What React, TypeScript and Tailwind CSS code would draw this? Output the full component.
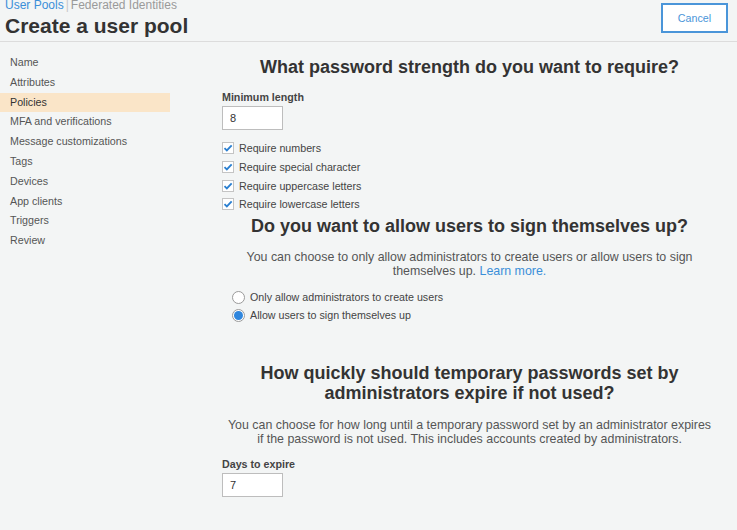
const navItems = [
  "Name",
  "Attributes",
  "Policies",
  "MFA and verifications",
  "Message customizations",
  "Tags",
  "Devices",
  "App clients",
  "Triggers",
  "Review",
]

const checks = [
  "Require numbers",
  "Require special character",
  "Require uppercase letters",
  "Require lowercase letters",
]

const Check = () => (
  <span className="flex h-[12px] w-[12px] items-center justify-center border border-[#c4c4c4] bg-white">
    <svg viewBox="0 0 12 12" className="h-[10px] w-[10px]">
      <path d="M1.8 6.2 L4.6 8.9 L10.4 2.8" fill="none" stroke="#2a7fd0" strokeWidth="2.2" />
    </svg>
  </span>
)

const Radio = ({ on }: { on?: boolean }) => (
  <span className="flex h-[13px] w-[13px] items-center justify-center rounded-full border border-[#9a9a9a] bg-white">
    {on && <span className="h-[9px] w-[9px] rounded-full bg-[#2f86dd]"></span>}
  </span>
)

export default function App() {
  return (
    <div className="min-h-screen w-full bg-[#f3f5f5] text-[#444] font-['Liberation_Sans',Arial,sans-serif]">
      <div className="flex h-[42px] items-start justify-between border-b border-[#dcdcdc] pl-[5px] pr-[9px]">
        <div>
          <div className="text-[12px] leading-[12px] -mt-[1px]">
            <span className="text-[#3b8fd9]">User Pools</span>
            <span className="mx-[2px] text-[#c8c8c8]">|</span>
            <span className="text-[#9a9a9a]">Federated Identities</span>
          </div>
          <h1 className="mt-[3px] text-[21px] font-bold leading-[24px] text-[#333]">Create a user pool</h1>
        </div>
        <button className="mt-[3px] h-[30px] w-[67px] border-2 border-[#4a95d9] bg-white text-[10.7px] text-[#4a95d9]">
          Cancel
        </button>
      </div>

      <div className="flex">
        <div className="w-[170px] pt-[11px]">
          {navItems.map((n) => (
            <div
              key={n}
              className={`h-[19.8px] pl-[10px] text-[10.7px] leading-[19.8px] ${n === "Policies" ? "bg-[#fae5c8] text-[#333]" : "text-[#555]"}`}
            >
              {n}
            </div>
          ))}
        </div>

        <div className="ml-[52px] w-[495px] pt-[14px]">
          <h2 className="text-center text-[18px] font-bold leading-[22px] text-[#333]">
            What password strength do you want to require?
          </h2>
          <div className="mt-[12px] text-[10.7px] font-bold leading-[14px] text-[#444]">Minimum length</div>
          <div className="mt-[2px] flex h-[24px] w-[61px] items-center border border-[#bdbdbd] bg-white pl-[7px] text-[11px] text-[#333]">
            8
          </div>
          <div className="mt-[11px] flex flex-col gap-[4.8px]">
            {checks.map((c) => (
              <label key={c} className="flex items-center gap-[5px] text-[10.7px] leading-[14px] text-[#444]">
                <Check />
                {c}
              </label>
            ))}
          </div>

          <h2 className="mt-[4px] text-center text-[18px] font-bold leading-[22px] text-[#333]">
            Do you want to allow users to sign themselves up?
          </h2>
          <p className="mx-auto mt-[13px] w-[470px] text-center text-[12.4px] leading-[14px] text-[#555]">
            You can choose to only allow administrators to create users or allow users to sign themselves up.{" "}
            <span className="text-[#3b8fd9]">Learn more.</span>
          </p>
          <div className="ml-[10px] mt-[12px] flex flex-col gap-[4px]">
            <label className="flex items-center gap-[5px] text-[10.7px] leading-[14px] text-[#444]">
              <Radio />
              Only allow administrators to create users
            </label>
            <label className="flex items-center gap-[5px] text-[10.7px] leading-[14px] text-[#444]">
              <Radio on />
              Allow users to sign themselves up
            </label>
          </div>

          <h2 className="mx-auto mt-[41px] w-[440px] text-center text-[18px] font-bold leading-[20px] text-[#333]">
            How quickly should temporary passwords set by administrators expire if not used?
          </h2>
          <p className="mx-auto mt-[15px] w-[488px] text-center text-[12.4px] leading-[14px] text-[#555]">
            You can choose for how long until a temporary password set by an administrator expires if the password is
            not used. This includes accounts created by administrators.
          </p>
          <div className="mt-[11px] text-[10.7px] font-bold leading-[14px] text-[#444]">Days to expire</div>
          <div className="mt-[2px] flex h-[24px] w-[61px] items-center border border-[#bdbdbd] bg-white pl-[7px] text-[11px] text-[#333]">
            7
          </div>
        </div>
      </div>
    </div>
  )
}
